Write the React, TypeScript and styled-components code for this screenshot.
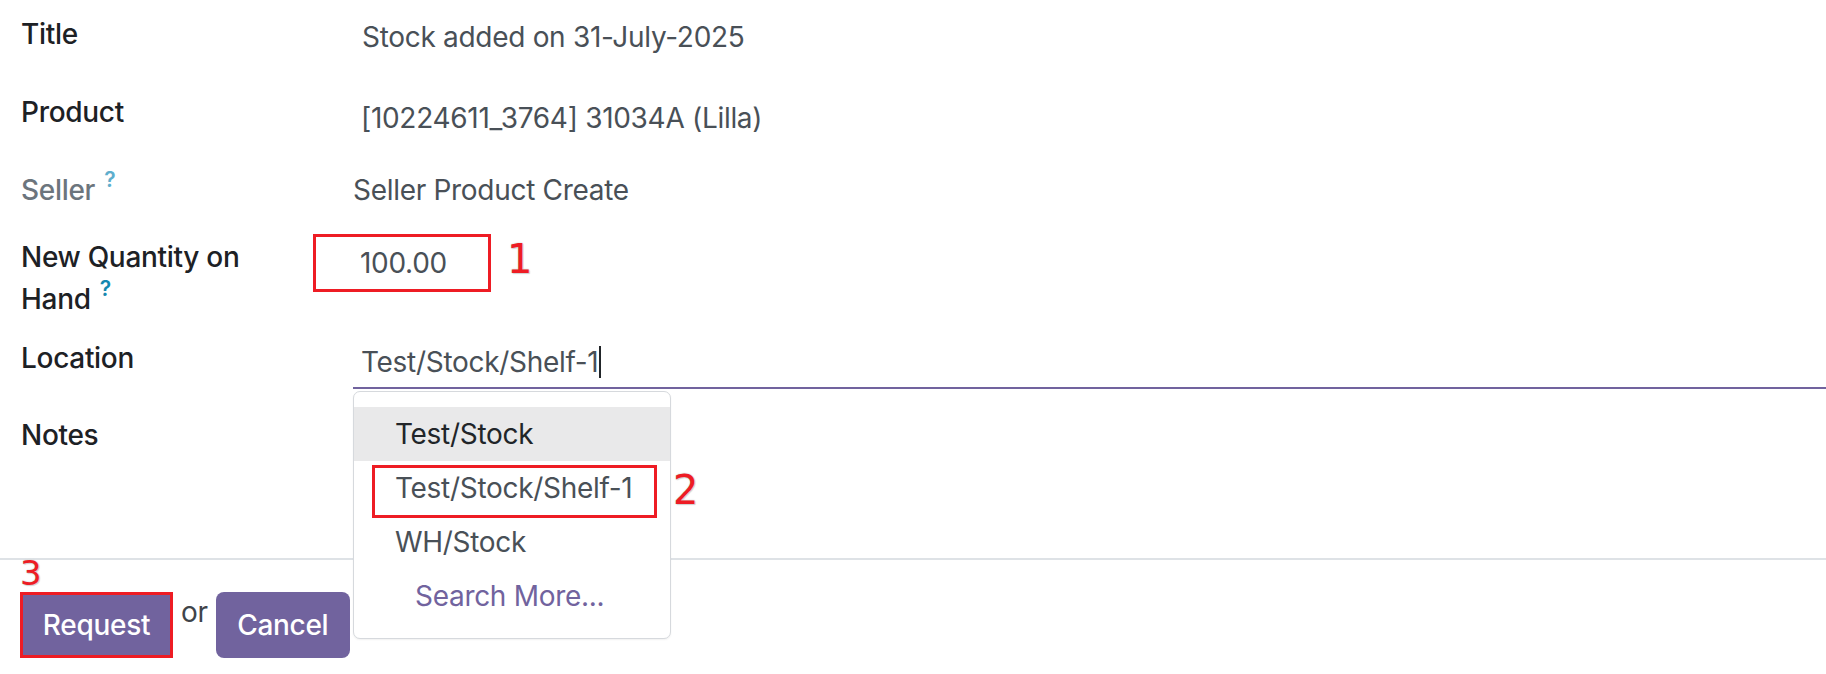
import styled, { createGlobalStyle } from "styled-components";

const GlobalStyle = createGlobalStyle`
  html, body {
    margin: 0;
    padding: 0;
    background: #ffffff;
  }
  body {
    font-family: Inter, "Noto Sans", sans-serif;
    letter-spacing: -0.3px;
    color: #212529;
  }
`;

const PURPLE = "#71639e";
const RED = "#ee1c24";

const locations = ["Test/Stock", "Test/Stock/Shelf-1", "WH/Stock"];

const App = () => {
  return (
    <Page>
      <GlobalStyle />
      <Sheet>
        <Row $h={78}>
          <Label>Title</Label>
          <Value $dy={3} $dx={9}>Stock added on 31-July-2025</Value>
        </Row>
        <Row $h={78}>
          <Label>Product</Label>
          <Value $dy={6} $dx={8}>[10224611_3764] 31034A (Lilla)</Value>
        </Row>
        <Row $h={67}>
          <Label $muted>
            Seller<Help $muted>?</Help>
          </Label>
          <Value>Seller Product Create</Value>
        </Row>
        <Row $h={101}>
          <Label>
            {"New Quantity on "}
            {"Hand"}
            <Help>?</Help>
          </Label>
          <Value $dy={6} $dx={7}>
            100.00
            <Mark $left={-40} $top={-2} $w={178} $h={58} />
            <Step $left={154} $top={3}>1</Step>
          </Value>
        </Row>
        <Row $h={77}>
          <Label>Location</Label>
          <Cell>
            <LineInput>
              Test/Stock/Shelf-1
              <Caret />
            </LineInput>
            <Dropdown>
              {locations.map((loc, i) => (
                <Item key={loc} $active={i === 0}>
                  {loc}
                  {i === 1 && (
                    <>
                      <Mark $left={18} $top={4} $w={285} $h={53} />
                      <Step $left={319} $top={9}>2</Step>
                    </>
                  )}
                </Item>
              ))}
              <Item $link>Search More...</Item>
            </Dropdown>
          </Cell>
        </Row>
        <Row $h={144}>
          <Label>Notes</Label>
          <Cell />
        </Row>
      </Sheet>
      <Separator />
      <Footer>
        <ButtonSlot>
          <Step $left={0} $top={-36} $size={34}>3</Step>
          <Button $marked $w={153}>Request</Button>
        </ButtonSlot>
        <Or>or</Or>
        <Button $w={134}>Cancel</Button>
      </Footer>
    </Page>
  );
};

export default App;

const Page = styled.div`
  width: 1826px;
  height: 674px;
  overflow: hidden;
  background: #ffffff;
`;

const Sheet = styled.div`
  padding: 13px 0 0 21px;
`;

const Row = styled.div<{ $h: number }>`
  display: grid;
  grid-template-columns: 332px 1fr;
  height: ${(p) => p.$h}px;
`;

const Label = styled.div<{ $muted?: boolean }>`
  max-width: 250px;
  font-size: 28px;
  line-height: 42px;
  font-weight: 500;
  color: ${(p) => (p.$muted ? "#6c757d" : "#1d2125")};
`;

const Help = styled.span<{ $muted?: boolean }>`
  display: inline-block;
  margin-left: 9px;
  font-size: 21px;
  line-height: 1;
  font-weight: 600;
  vertical-align: top;
  position: relative;
  top: 0;
  color: ${(p) => (p.$muted ? "#5eaecd" : "#1588b0")};
`;

const Cell = styled.div`
  position: relative;
`;

const Value = styled.div<{ $dy?: number; $dx?: number }>`
  position: relative;
  font-size: 28px;
  line-height: 42px;
  color: #495057;
  padding-top: ${(p) => p.$dy ?? 0}px;
  padding-left: ${(p) => p.$dx ?? 0}px;
`;

const LineInput = styled.div`
  font-size: 28px;
  line-height: 42px;
  color: #495057;
  padding: 4px 8px 4px 8px;
  border-bottom: 2px solid ${PURPLE};
`;

const Caret = styled.span`
  display: inline-block;
  width: 2px;
  height: 32px;
  margin-left: 1px;
  vertical-align: -6px;
  background: #212529;
`;

const Dropdown = styled.div`
  position: absolute;
  z-index: 2;
  top: 54px;
  left: 0;
  width: 318px;
  box-sizing: border-box;
  padding: 15px 0;
  background: #ffffff;
  border: 1px solid #d6d9dd;
  border-radius: 7px;
  box-shadow: 0 1px 2px rgba(0, 0, 0, 0.06);
`;

const Item = styled.div<{ $active?: boolean; $link?: boolean }>`
  position: relative;
  height: 54px;
  box-sizing: border-box;
  padding: 6px 0 6px ${(p) => (p.$link ? 61 : 41)}px;
  font-size: 28px;
  line-height: 42px;
  white-space: nowrap;
  background: ${(p) => (p.$active ? "#e9e9ea" : "transparent")};
  color: ${(p) => (p.$link ? PURPLE : p.$active ? "#212529" : "#495057")};
`;

const Mark = styled.div<{ $left: number; $top: number; $w: number; $h: number }>`
  position: absolute;
  left: ${(p) => p.$left}px;
  top: ${(p) => p.$top}px;
  width: ${(p) => p.$w}px;
  height: ${(p) => p.$h}px;
  box-sizing: border-box;
  border: 3px solid ${RED};
  pointer-events: none;
`;

const Step = styled.span<{ $left: number; $top: number; $size?: number }>`
  position: absolute;
  left: ${(p) => p.$left}px;
  top: ${(p) => p.$top}px;
  font-family: "DejaVu Sans", sans-serif;
  font-size: ${(p) => p.$size ?? 40}px;
  letter-spacing: 0;
  line-height: 1;
  color: ${RED};
  text-shadow: 0 0 1px #c8c8c8, 0 0 2px #d8d8d8, 1px 1px 1px #d0d0d0;
`;

const Separator = styled.div`
  height: 2px;
  background: #dee2e6;
`;

const Footer = styled.div`
  display: flex;
  align-items: flex-start;
  gap: 8px;
  padding: 32px 0 0 20px;
`;

const ButtonSlot = styled.div`
  position: relative;
`;

const Button = styled.button<{ $marked?: boolean; $w: number }>`
  width: ${(p) => p.$w}px;
  height: 66px;
  box-sizing: border-box;
  padding: 0;
  border: ${(p) => (p.$marked ? `3px solid ${RED}` : "none")};
  border-radius: ${(p) => (p.$marked ? 0 : 8)}px;
  background: ${PURPLE};
  color: #ffffff;
  font-family: Inter, "Noto Sans", sans-serif;
  font-size: 28px;
  font-weight: 500;
  letter-spacing: -0.3px;
  line-height: 42px;
`;

const Or = styled.span`
  font-size: 28px;
  line-height: 42px;
  color: #3f444a;
  margin-top: -1px;
`;
